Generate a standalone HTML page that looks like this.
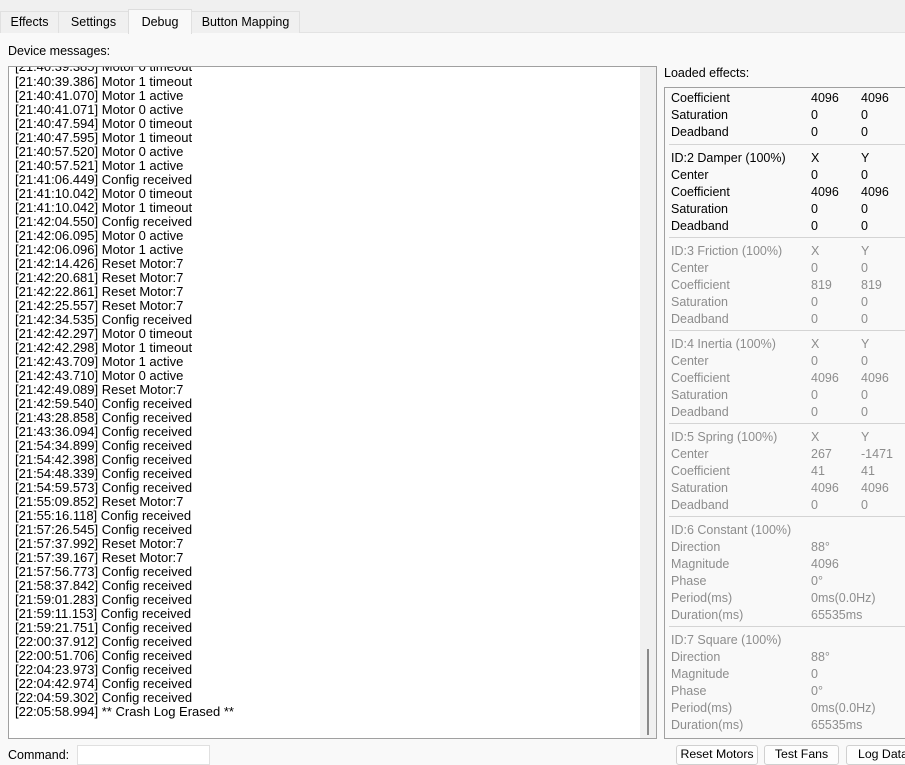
<!DOCTYPE html>
<html><head><meta charset="utf-8"><style>
*{margin:0;padding:0;box-sizing:border-box}
body{width:905px;height:760px;overflow:hidden;background:#f9f9f9;font-family:"Liberation Sans",sans-serif;font-size:12px;color:#000;position:relative}
.tabbar{position:absolute;left:0;top:0;width:905px;height:33px;background:#f0f0f0;border-bottom:1px solid #e3e3e3}
.tab{position:absolute;top:11px;height:22px;border:1px solid #e0e0e0;border-bottom:none;background:#f0f0f0;text-align:center;line-height:21px;font-size:12.5px}
.tab.sel{top:9px;height:25px;background:#f9f9f9;line-height:25px;border-color:#ddd}
.abs{position:absolute;white-space:nowrap}
.log{position:absolute;left:8px;top:66px;width:649px;height:673px;background:#fff;border:1px solid #a0a0a0;overflow:hidden}
.log div{position:absolute;left:6px;height:14px;line-height:14px;font-size:13px;white-space:nowrap;margin-top:1px}
.sb{position:absolute;right:0;top:0;width:16px;height:100%;background:#f0f0f0}
.eff{position:absolute;left:664px;top:87px;width:241px;height:652px;border:1px solid #a0a0a0;border-right:none;background:#f9f9f9;overflow:hidden}
.eff div{position:absolute;font-size:12.5px;white-space:nowrap;line-height:17px;margin-top:1px}
.g{color:#8d8d8d}
.eff .sep{height:1px;background:#d4d4d4;left:4px;width:240px;margin-top:0}
.btn{position:absolute;top:745px;height:20px;border:1px solid #d0d0d0;border-radius:3px;background:#fdfdfd;font-size:12.3px;line-height:17px;text-align:center}
</style></head><body>
<div class="tabbar"></div>
<div class="tab" style="left:0;width:59px">Effects</div>
<div class="tab" style="left:58px;width:71px">Settings</div>
<div class="tab sel" style="left:128px;width:64px">Debug</div>
<div class="tab" style="left:191px;width:109px">Button Mapping</div>
<div class="abs" style="left:8px;top:44px;font-size:12.5px">Device messages:</div>
<div class="log">
<div style="top:-8px">[21:40:39.385] Motor 0 timeout</div>
<div style="top:7px">[21:40:39.386] Motor 1 timeout</div>
<div style="top:21px">[21:40:41.070] Motor 1 active</div>
<div style="top:35px">[21:40:41.071] Motor 0 active</div>
<div style="top:49px">[21:40:47.594] Motor 0 timeout</div>
<div style="top:63px">[21:40:47.595] Motor 1 timeout</div>
<div style="top:77px">[21:40:57.520] Motor 0 active</div>
<div style="top:91px">[21:40:57.521] Motor 1 active</div>
<div style="top:105px">[21:41:06.449] Config received</div>
<div style="top:119px">[21:41:10.042] Motor 0 timeout</div>
<div style="top:133px">[21:41:10.042] Motor 1 timeout</div>
<div style="top:147px">[21:42:04.550] Config received</div>
<div style="top:161px">[21:42:06.095] Motor 0 active</div>
<div style="top:175px">[21:42:06.096] Motor 1 active</div>
<div style="top:189px">[21:42:14.426] Reset Motor:7</div>
<div style="top:203px">[21:42:20.681] Reset Motor:7</div>
<div style="top:217px">[21:42:22.861] Reset Motor:7</div>
<div style="top:231px">[21:42:25.557] Reset Motor:7</div>
<div style="top:245px">[21:42:34.535] Config received</div>
<div style="top:259px">[21:42:42.297] Motor 0 timeout</div>
<div style="top:273px">[21:42:42.298] Motor 1 timeout</div>
<div style="top:287px">[21:42:43.709] Motor 1 active</div>
<div style="top:301px">[21:42:43.710] Motor 0 active</div>
<div style="top:315px">[21:42:49.089] Reset Motor:7</div>
<div style="top:329px">[21:42:59.540] Config received</div>
<div style="top:343px">[21:43:28.858] Config received</div>
<div style="top:357px">[21:43:36.094] Config received</div>
<div style="top:371px">[21:54:34.899] Config received</div>
<div style="top:385px">[21:54:42.398] Config received</div>
<div style="top:399px">[21:54:48.339] Config received</div>
<div style="top:413px">[21:54:59.573] Config received</div>
<div style="top:427px">[21:55:09.852] Reset Motor:7</div>
<div style="top:441px">[21:55:16.118] Config received</div>
<div style="top:455px">[21:57:26.545] Config received</div>
<div style="top:469px">[21:57:37.992] Reset Motor:7</div>
<div style="top:483px">[21:57:39.167] Reset Motor:7</div>
<div style="top:497px">[21:57:56.773] Config received</div>
<div style="top:511px">[21:58:37.842] Config received</div>
<div style="top:525px">[21:59:01.283] Config received</div>
<div style="top:539px">[21:59:11.153] Config received</div>
<div style="top:553px">[21:59:21.751] Config received</div>
<div style="top:567px">[22:00:37.912] Config received</div>
<div style="top:581px">[22:00:51.706] Config received</div>
<div style="top:595px">[22:04:23.973] Config received</div>
<div style="top:609px">[22:04:42.974] Config received</div>
<div style="top:623px">[22:04:59.302] Config received</div>
<div style="top:637px">[22:05:58.994] ** Crash Log Erased **</div>
<section class="sb" style="position:absolute;right:0;top:0;width:16px;height:100%;background:#f0f0f0"><span style="position:absolute;left:7px;top:582px;width:2px;height:86px;background:#8a8a8a;display:block"></span></section>
</div>
<div class="abs" style="left:664px;top:66px;font-size:12.5px">Loaded effects:</div>
<div class="eff">
<div style="left:6px;top:1px">Coefficient</div><div style="left:146px;top:1px">4096</div><div style="left:196px;top:1px">4096</div>
<div style="left:6px;top:18px">Saturation</div><div style="left:146px;top:18px">0</div><div style="left:196px;top:18px">0</div>
<div style="left:6px;top:35px">Deadband</div><div style="left:146px;top:35px">0</div><div style="left:196px;top:35px">0</div>
<div class="sep" style="top:56px"></div>
<div style="left:6px;top:61px">ID:2 Damper (100%)</div><div style="left:146px;top:61px">X</div><div style="left:196px;top:61px">Y</div>
<div style="left:6px;top:78px">Center</div><div style="left:146px;top:78px">0</div><div style="left:196px;top:78px">0</div>
<div style="left:6px;top:95px">Coefficient</div><div style="left:146px;top:95px">4096</div><div style="left:196px;top:95px">4096</div>
<div style="left:6px;top:112px">Saturation</div><div style="left:146px;top:112px">0</div><div style="left:196px;top:112px">0</div>
<div style="left:6px;top:129px">Deadband</div><div style="left:146px;top:129px">0</div><div style="left:196px;top:129px">0</div>
<div class="sep" style="top:149px"></div>
<div class="g" style="left:6px;top:154px">ID:3 Friction (100%)</div><div class="g" style="left:146px;top:154px">X</div><div class="g" style="left:196px;top:154px">Y</div>
<div class="g" style="left:6px;top:171px">Center</div><div class="g" style="left:146px;top:171px">0</div><div class="g" style="left:196px;top:171px">0</div>
<div class="g" style="left:6px;top:188px">Coefficient</div><div class="g" style="left:146px;top:188px">819</div><div class="g" style="left:196px;top:188px">819</div>
<div class="g" style="left:6px;top:205px">Saturation</div><div class="g" style="left:146px;top:205px">0</div><div class="g" style="left:196px;top:205px">0</div>
<div class="g" style="left:6px;top:222px">Deadband</div><div class="g" style="left:146px;top:222px">0</div><div class="g" style="left:196px;top:222px">0</div>
<div class="sep" style="top:242px"></div>
<div class="g" style="left:6px;top:247px">ID:4 Inertia (100%)</div><div class="g" style="left:146px;top:247px">X</div><div class="g" style="left:196px;top:247px">Y</div>
<div class="g" style="left:6px;top:264px">Center</div><div class="g" style="left:146px;top:264px">0</div><div class="g" style="left:196px;top:264px">0</div>
<div class="g" style="left:6px;top:281px">Coefficient</div><div class="g" style="left:146px;top:281px">4096</div><div class="g" style="left:196px;top:281px">4096</div>
<div class="g" style="left:6px;top:298px">Saturation</div><div class="g" style="left:146px;top:298px">0</div><div class="g" style="left:196px;top:298px">0</div>
<div class="g" style="left:6px;top:315px">Deadband</div><div class="g" style="left:146px;top:315px">0</div><div class="g" style="left:196px;top:315px">0</div>
<div class="sep" style="top:335px"></div>
<div class="g" style="left:6px;top:340px">ID:5 Spring (100%)</div><div class="g" style="left:146px;top:340px">X</div><div class="g" style="left:196px;top:340px">Y</div>
<div class="g" style="left:6px;top:357px">Center</div><div class="g" style="left:146px;top:357px">267</div><div class="g" style="left:196px;top:357px">-1471</div>
<div class="g" style="left:6px;top:374px">Coefficient</div><div class="g" style="left:146px;top:374px">41</div><div class="g" style="left:196px;top:374px">41</div>
<div class="g" style="left:6px;top:391px">Saturation</div><div class="g" style="left:146px;top:391px">4096</div><div class="g" style="left:196px;top:391px">4096</div>
<div class="g" style="left:6px;top:408px">Deadband</div><div class="g" style="left:146px;top:408px">0</div><div class="g" style="left:196px;top:408px">0</div>
<div class="sep" style="top:428px"></div>
<div class="g" style="left:6px;top:433px">ID:6 Constant (100%)</div>
<div class="g" style="left:6px;top:450px">Direction</div><div class="g" style="left:146px;top:450px">88°</div>
<div class="g" style="left:6px;top:467px">Magnitude</div><div class="g" style="left:146px;top:467px">4096</div>
<div class="g" style="left:6px;top:484px">Phase</div><div class="g" style="left:146px;top:484px">0°</div>
<div class="g" style="left:6px;top:501px">Period(ms)</div><div class="g" style="left:146px;top:501px">0ms(0.0Hz)</div>
<div class="g" style="left:6px;top:518px">Duration(ms)</div><div class="g" style="left:146px;top:518px">65535ms</div>
<div class="sep" style="top:538px"></div>
<div class="g" style="left:6px;top:543px">ID:7 Square (100%)</div>
<div class="g" style="left:6px;top:560px">Direction</div><div class="g" style="left:146px;top:560px">88°</div>
<div class="g" style="left:6px;top:577px">Magnitude</div><div class="g" style="left:146px;top:577px">0</div>
<div class="g" style="left:6px;top:594px">Phase</div><div class="g" style="left:146px;top:594px">0°</div>
<div class="g" style="left:6px;top:611px">Period(ms)</div><div class="g" style="left:146px;top:611px">0ms(0.0Hz)</div>
<div class="g" style="left:6px;top:628px">Duration(ms)</div><div class="g" style="left:146px;top:628px">65535ms</div>
</div>
<div class="abs" style="left:8px;top:748px;font-size:12.5px">Command:</div>
<div class="abs" style="left:77px;top:745px;width:133px;height:20px;background:#fff;border:1px solid #e0e0e0"></div>
<div class="btn" style="left:676px;width:82px">Reset Motors</div>
<div class="btn" style="left:764px;width:75px">Test Fans</div>
<div class="btn" style="left:846px;width:70px;text-align:left;padding-left:11px">Log Data</div>
</body></html>
